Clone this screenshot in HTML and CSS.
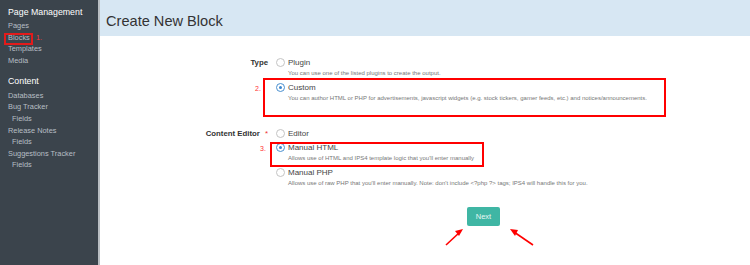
FILE: index.html
```html
<!DOCTYPE html>
<html lang="en">
<head>
    <meta charset="UTF-8">
    <title>Create New Block</title>
    <link rel="stylesheet" href="styles.css">
</head>
<body>
<div class="page">

<!-- Sidebar menu -->
<nav class="sidebar">
    <h3>Page Management</h3>
    <a class="item">Pages</a>
    <a class="item">Blocks</a>
    <a class="item">Templates</a>
    <a class="item">Media</a>
    <h3 class="second">Content</h3>
    <a class="item">Databases</a>
    <a class="item">Bug Tracker</a>
    <a class="item sub">Fields</a>
    <a class="item">Release Notes</a>
    <a class="item sub">Fields</a>
    <a class="item">Suggestions Tracker</a>
    <a class="item sub">Fields</a>
</nav>

<!-- Main area -->
<main class="main">
    <header class="title-bar">
        <h1>Create New Block</h1>
    </header>

    <form class="form">
        <div class="row">
            <label class="row-label">Type</label>
            <div class="options">
                <div class="option">
                    <span class="radio"></span>
                    <div class="option-text">
                        <div class="option-title">Plugin</div>
                        <div class="option-desc">You can use one of the listed plugins to create the output.</div>
                    </div>
                </div>
                <div class="option">
                    <span class="radio checked"></span>
                    <div class="option-text">
                        <div class="option-title">Custom</div>
                        <div class="option-desc">You can author HTML or PHP for advertisements, javascript widgets (e.g. stock tickers, gamer feeds, etc.) and notices/announcements.</div>
                    </div>
                </div>
            </div>
        </div>

        <div class="row second">
            <label class="row-label">Content Editor <span class="req">*</span></label>
            <div class="options">
                <div class="option">
                    <span class="radio"></span>
                    <div class="option-text">
                        <div class="option-title">Editor</div>
                    </div>
                </div>
                <div class="option">
                    <span class="radio checked"></span>
                    <div class="option-text">
                        <div class="option-title">Manual HTML</div>
                        <div class="option-desc">Allows use of HTML and IPS4 template logic that you'll enter manually</div>
                    </div>
                </div>
                <div class="option">
                    <span class="radio"></span>
                    <div class="option-text">
                        <div class="option-title">Manual PHP</div>
                        <div class="option-desc">Allows use of raw PHP that you'll enter manually. Note: don't include &lt;?php ?&gt; tags; IPS4 will handle this for you.</div>
                    </div>
                </div>
            </div>
        </div>

        <div class="actions">
            <button type="button" class="btn-next">Next</button>
        </div>
    </form>
</main>

<!-- Annotations drawn over the screenshot -->
<div class="mark mark-1"></div>
<span class="step step-1">1.</span>
<div class="mark mark-2"></div>
<span class="step step-2">2.</span>
<div class="mark mark-3"></div>
<span class="step step-3">3.</span>
<svg class="arrows" width="750" height="265" viewBox="0 0 750 265">
    <g stroke="#f00" stroke-width="1.6" fill="#f00">
        <line x1="446" y1="245" x2="460" y2="232"/>
        <polygon points="463,229 455,231 459,236" stroke="none"/>
        <line x1="533" y1="245" x2="514" y2="232"/>
        <polygon points="510,229 515,236 518,230" stroke="none"/>
    </g>
</svg>

</div>
</body>
</html>
```

FILE: styles.css
```css
* { box-sizing: border-box; }
body {
  margin: 0;
  font-family: "Liberation Sans", Arial, sans-serif;
  background: #fff;
  color: #333;
}
.page {
  position: relative;
  display: flex;
  width: 750px;
  height: 265px;
  overflow: hidden;
}
/* Sidebar */
.sidebar {
  width: 100px;
  flex-shrink: 0;
  background: #3b444c;
  border-right: 2px solid #b9bec2;
  padding: 6px 0 0 8px;
}
.sidebar h3 {
  margin: 0 0 2px;
  font-size: 8.8px;
  font-weight: normal;
  color: #fff;
  line-height: 12px;
  white-space: nowrap;
}
.sidebar h3.second { margin: 8.5px 0 3px; }
.sidebar .item {
  display: block;
  font-size: 7.4px;
  line-height: 11.6px;
  color: #b7bfc5;
  white-space: nowrap;
}
.sidebar .item.sub { padding-left: 4px; }
/* Main */
.main { flex: 1; }
.title-bar {
  background: #d7e7f3;
  height: 36px;
  padding: 0 6px;
  display: flex;
  align-items: center;
}
.title-bar h1 {
  margin: 5px 0 0;
  font-size: 14.6px;
  font-weight: normal;
  color: #333;
}
.form { padding-top: 20.5px; }
.row {
  display: grid;
  grid-template-columns: 168px 1fr;
  column-gap: 8px;
}
.row.second { margin-top: 21px; }
.row-label {
  text-align: right;
  font-size: 7.8px;
  font-weight: bold;
  line-height: 11px;
  color: #333;
}
.req {
  color: #e33;
  font-weight: normal;
  margin-left: 3px;
}
.option {
  display: flex;
  align-items: flex-start;
  gap: 3px;
  margin-bottom: 3px;
}
.radio {
  width: 9px;
  height: 9px;
  margin-top: 1px;
  border: 1px solid #c4c4c4;
  border-radius: 50%;
  background: #fff;
  flex-shrink: 0;
  position: relative;
}
.radio.checked { border-color: #4a90d0; }
.radio.checked::after {
  content: "";
  position: absolute;
  left: 2px;
  top: 2px;
  width: 3px;
  height: 3px;
  border-radius: 50%;
  background: #3a86cf;
}
.option-title {
  font-size: 8px;
  line-height: 11px;
  color: #444;
}
.option-desc {
  font-size: 6px;
  line-height: 11px;
  color: #777;
  white-space: nowrap;
}
.actions { padding: 13.5px 0 0 367px; }
.btn-next {
  width: 33px;
  height: 19px;
  border: none;
  border-radius: 2px;
  background: #3fb6a4;
  color: #e8f6f3;
  font-family: inherit;
  font-size: 7.5px;
  padding: 0;
}
/* Annotations */
.mark {
  position: absolute;
  border: 2px solid #f00;
}
.mark-1 { left: 4px; top: 33px; width: 29px; height: 12px; border-color: #e31b1b; }
.mark-2 { left: 263px; top: 78px; width: 403px; height: 39px; }
.mark-3 { left: 270px; top: 142px; width: 214px; height: 25px; }
.step {
  position: absolute;
  color: #f33;
  font-size: 7px;
  line-height: 8px;
}
.step-1 { left: 36px; top: 34px; }
.step-2 { left: 255px; top: 85px; }
.step-3 { left: 260px; top: 145px; }
.arrows {
  position: absolute;
  left: 0;
  top: 0;
  pointer-events: none;
}
```
